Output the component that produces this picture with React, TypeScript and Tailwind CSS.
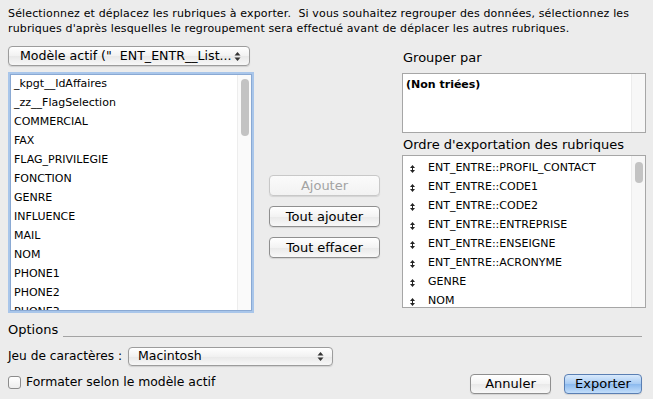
import React from 'react';

const leftItems = [
  '_kpgt__IdAffaires',
  '_zz__FlagSelection',
  'COMMERCIAL',
  'FAX',
  'FLAG_PRIVILEGIE',
  'FONCTION',
  'GENRE',
  'INFLUENCE',
  'MAIL',
  'NOM',
  'PHONE1',
  'PHONE2',
  'PHONE3',
];

const exportItems = [
  'ENT_ENTRE::PROFIL_CONTACT',
  'ENT_ENTRE::CODE1',
  'ENT_ENTRE::CODE2',
  'ENT_ENTRE::ENTREPRISE',
  'ENT_ENTRE::ENSEIGNE',
  'ENT_ENTRE::ACRONYME',
  'GENRE',
  'NOM',
];

function UpDown({ className = '' }: { className?: string }) {
  return (
    <svg width="7" height="11" viewBox="0 0 7 11" className={className}>
      <path d="M3.5 1 L6.5 4.5 L0.5 4.5 Z" fill="#333" />
      <path d="M3.5 10 L6.5 6.5 L0.5 6.5 Z" fill="#333" />
    </svg>
  );
}

function MoveHandle() {
  return (
    <svg width="7" height="10" viewBox="0 0 7 10" className="shrink-0">
      <path d="M3.5 1 L6 4 L1 4 Z" fill="#222" />
      <path d="M3.5 9 L6 6 L1 6 Z" fill="#222" />
      <rect x="3" y="3.5" width="1" height="3" fill="#222" />
    </svg>
  );
}

function Popup({ label, className = '', textClass = 'text-[13px]' }: { label: string; className?: string; textClass?: string }) {
  return (
    <div
      className={`flex items-center justify-between rounded-[4px] border border-[#9c9c9c] bg-[linear-gradient(#ffffff,#f1f1f1_50%,#e8e8e8_51%,#f7f7f7)] pr-[8px] shadow-[0_1px_1px_rgba(0,0,0,0.12)] ${className}`}
    >
      <span className={`whitespace-pre leading-[16px] text-black ${textClass}`}>{label}</span>
      <UpDown />
    </div>
  );
}

function PushButton({
  label,
  disabled,
  primary,
  className = '',
}: {
  label: string;
  disabled?: boolean;
  primary?: boolean;
  className?: string;
}) {
  const look = primary
    ? 'border-[#5a7fb3] bg-[linear-gradient(#d9eafc,#a6caf3_50%,#8bb9ee_51%,#c3defa)] text-black'
    : disabled
      ? 'border-[#c8c8c8] bg-[linear-gradient(#fbfbfb,#f2f2f2)] text-[#a3a3a3]'
      : 'border-[#8f8f8f] bg-[linear-gradient(#ffffff,#f3f3f3_50%,#e9e9e9_51%,#f8f8f8)] text-black';
  return (
    <div
      className={`flex items-center justify-center rounded-[4px] border text-[13px] leading-none shadow-[0_1px_1px_rgba(0,0,0,0.1)] ${look} ${className}`}
    >
      {label}
    </div>
  );
}

export default function App() {
  return (
    <div
      className="h-[399px] w-[653px] overflow-hidden bg-[#ececec] text-black"
      style={{ fontFamily: '"DejaVu Sans", "Liberation Sans", sans-serif' }}
    >
      <p className="pl-[8px] pr-[6px] pt-[6px] text-[11px] leading-[15px] tracking-[0.15px]">
        Sélectionnez et déplacez les rubriques à exporter.&nbsp; Si vous souhaitez regrouper des données, sélectionnez les
        rubriques d'après lesquelles le regroupement sera effectué avant de déplacer les autres rubriques.
      </p>

      <div className="mt-[9px] flex h-[270px]">
        {/* left column */}
        <div className="ml-[8px] w-[242px]">
          <Popup
            label={'Modèle actif ("  ENT_ENTR__List...'}
            textClass="text-[12.6px]"
            className="mt-px h-[20px] pl-[11px]"
          />
          <div className="ml-[2px] mt-[8px] flex h-[237px] w-[242px] overflow-hidden border border-[#8aa9d3] bg-white shadow-[0_0_0_2px_#a9c6ea]">
            <div className="flex-1 overflow-hidden">
              {leftItems.map((it) => (
                <div key={it} className="flex h-[19px] items-center pl-[3px] text-[11px]">
                  {it}
                </div>
              ))}
            </div>
            <div className="w-[14px] border-l border-[#ededed] bg-[#fafafa] pt-[4px]">
              <div className="mx-auto h-[57px] w-[8px] rounded-full bg-[#c3c3c3]" />
            </div>
          </div>
        </div>

        {/* middle buttons */}
        <div className="ml-[19px] flex w-[111px] flex-col gap-[10px] pt-[130px]">
          <PushButton label="Ajouter" disabled className="h-[21px]" />
          <PushButton label="Tout ajouter" className="h-[21px]" />
          <PushButton label="Tout effacer" className="h-[21px]" />
        </div>

        {/* right column */}
        <div className="ml-[22px] w-[244px]">
          <div className="mt-[5px] h-[16px] pl-px text-[13px] leading-[16px]">Grouper par</div>
          <div className="mt-[7px] flex h-[60px] border border-[#a6a6a6] bg-white">
            <div className="flex-1 pl-[3px] pt-[3px] text-[11px] font-bold">(Non triées)</div>
            <div className="w-[14px] border-l border-[#ececec] bg-[#f7f7f7]" />
          </div>
          <div className="mt-[4px] h-[16px] pl-px text-[13px] leading-[16px]">Ordre d'exportation des rubriques</div>
          <div className="mt-[2px] flex h-[153px] border border-[#a6a6a6] bg-white">
            <div className="flex-1 overflow-hidden pt-[3px]">
              {exportItems.map((it) => (
                <div key={it} className="flex h-[19px] items-center gap-[12px] pl-[6px] text-[11px]">
                  <MoveHandle />
                  <span>{it}</span>
                </div>
              ))}
            </div>
            <div className="w-[14px] border-l border-[#ececec] bg-[#f7f7f7] pt-[6px]">
              <div className="mx-auto h-[21px] w-[8px] rounded-full bg-[#c3c3c3]" />
            </div>
          </div>
        </div>
      </div>

      {/* options */}
      <div className="mt-[7px] flex h-[16px] pl-[8px] pr-[11px]">
        <span className="text-[13px] leading-[16px]">Options</span>
        <div className="ml-[5px] mt-[14px] h-px flex-1 bg-[#a3a3a3]" />
      </div>

      <div className="mt-[8px] flex h-[20px] items-center pl-[8px]">
        <span className="text-[12.2px]">Jeu de caractères :</span>
        <Popup label="Macintosh" textClass="text-[12.5px]" className="ml-[6px] h-[19px] w-[205px] pl-[9px]" />
      </div>

      <div className="mt-[7px] flex h-[21px] items-center pl-[8px]">
        <div className="-mt-[3px] h-[13px] w-[13px] rounded-[3px] border border-[#8c8c8c] bg-[linear-gradient(#ffffff,#ededed)]" />
        <span className="-mt-[3px] ml-[5px] text-[12.4px]">Formater selon le modèle actif</span>
        <PushButton label="Annuler" className="ml-auto h-[20px] w-[81px]" />
        <PushButton label="Exporter" primary className="ml-[13px] mr-[11px] h-[20px] w-[78px]" />
      </div>
    </div>
  );
}
